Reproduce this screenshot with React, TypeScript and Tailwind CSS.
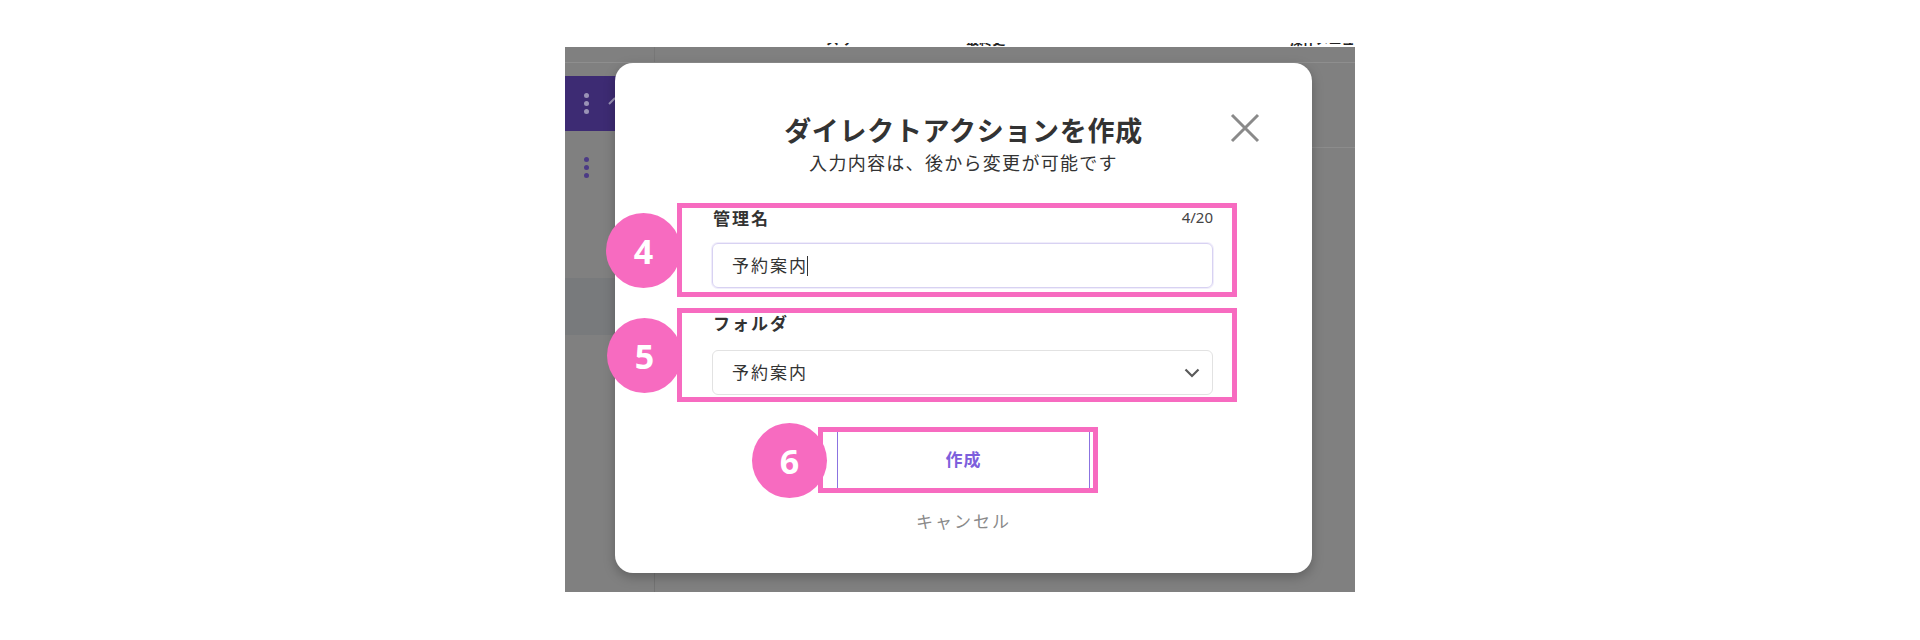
import React from "react";

const jp = { fontFamily: '"Noto Sans", "Noto Sans CJK JP", sans-serif' };

function Circle({ n, className }: { n: string; className: string }) {
  return (
    <div
      className={`absolute z-10 w-[75px] h-[75px] rounded-full bg-[#f76bc0] flex items-center justify-center text-white font-bold text-[34px] leading-none ${className}`}
      style={{ fontFamily: '"Open Sans", "Noto Sans", sans-serif' }}
    >
      {n}
    </div>
  );
}

function Dots({ color }: { color: string }) {
  return (
    <div className="flex flex-col gap-[3px]">
      <div className={`w-[5px] h-[5px] rounded-full ${color}`} />
      <div className={`w-[5px] h-[5px] rounded-full ${color}`} />
      <div className={`w-[5px] h-[5px] rounded-full ${color}`} />
    </div>
  );
}

export default function App() {
  return (
    <div className="w-[1920px] h-[640px] bg-white overflow-hidden" style={jp}>
      {/* top cropped text fragments */}
      <div className="h-[47px] flex flex-col justify-end">
        <div className="h-[4px] overflow-hidden ml-[565px] w-[790px] flex text-[13px] leading-[16px] font-bold text-[#222]">
          <span className="ml-[198px] mt-[-12px] tracking-[4px]">・・・</span>
          <span className="ml-[12px] mt-[-12px] tracking-[3px]">ステー</span>
          <span className="ml-[100px] mt-[-12px]">最終更新</span>
          <span className="ml-[280px] mt-[-12px]">操作メニュー</span>
        </div>
      </div>

      {/* dimmed app area */}
      <div className="ml-[565px] w-[790px] h-[545px] bg-[#808080] relative">
        <div className="h-[16px] border-b border-[#8e8e8e] flex">
          <div className="w-[90px] border-r border-[#777]" />
        </div>
        <div className="flex h-[529px]">
          <div className="w-[90px] border-r border-[#737373] flex flex-col">
            <div className="h-[13px]" />
            <div className="h-[55px] bg-[#3d2b73] flex items-center pl-[19px] gap-[19px]">
              <Dots color="bg-[#9a93b6]" />
              <svg width="8" height="8" viewBox="0 0 8 8" className="mt-[-6px]">
                <path d="M1 7 L7 1" stroke="#9a93b6" strokeWidth="2" />
              </svg>
            </div>
            <div className="h-[26px]" />
            <div className="pl-[19px]">
              <Dots color="bg-[#4b3a85]" />
            </div>
            <div className="h-[100px]" />
            <div className="h-[57px] bg-[#787a7c]" />
          </div>
          <div className="flex-1 flex flex-col">
            <div className="h-[85px] border-b border-[#8c8c8c]" />
          </div>
        </div>

        {/* modal */}
        <div className="absolute left-[50px] top-[16px] w-[697px] h-[510px] bg-white rounded-[18px] shadow-[0_4px_12px_rgba(0,0,0,0.25)] flex flex-col pt-[54px] text-[#333]">
          <button className="absolute left-[615px] top-[50px] w-[30px] h-[30px] flex items-center justify-center">
            <svg width="30" height="30" viewBox="0 0 30 30">
              <path d="M2 2 L28 28 M28 2 L2 28" stroke="#8a8a8a" strokeWidth="3" />
            </svg>
          </button>

          <h1 className="text-[27px] leading-[28px] font-bold text-center tracking-[0.7px] text-[#333]">
            ダイレクトアクションを作成
          </h1>
          <p className="mt-[8px] text-[18px] leading-[20px] text-center tracking-[1.3px] text-[#333]">
            入力内容は、後から変更が可能です
          </p>

          {/* box 1 */}
          <div className="relative mt-[30px] ml-[62px] w-[560px] h-[94px] border-[5px] border-[#f76bc0] pl-[30px] pr-[19px] flex flex-col">
            <Circle n="4" className="left-[-76px] top-[5px]" />
            <div className="h-[35px] flex items-start justify-between">
              <span className="text-[17px] leading-[21px] font-bold tracking-[2px] ml-[1px] text-[#333]">管理名</span>
              <span className="text-[15px] leading-[18px] text-[#444]">4/20</span>
            </div>
            <div className="h-[45px] rounded-[6px] border border-[#d8d2f2] shadow-[0_0_0_1px_#f0edfb] flex items-center pl-[19px]">
              <span className="text-[17px] leading-[20px] tracking-[2px] text-[#333]">予約案内</span>
              <span className="w-[1px] h-[20px] bg-[#333] ml-[-1px]" />
            </div>
          </div>

          {/* box 2 */}
          <div className="relative mt-[11px] ml-[62px] w-[560px] h-[94px] border-[5px] border-[#f76bc0] pl-[30px] pr-[19px] flex flex-col">
            <Circle n="5" className="left-[-75px] top-[5px]" />
            <div className="h-[37px] flex items-start">
              <span className="text-[17px] leading-[21px] font-bold tracking-[2px] ml-[1px] mt-[0px] text-[#333]">フォルダ</span>
            </div>
            <div className="h-[45px] rounded-[6px] border border-[#e2e2e2] flex items-center justify-between pl-[19px] pr-[12px]">
              <span className="text-[17px] leading-[20px] tracking-[2px] text-[#333]">予約案内</span>
              <svg width="16" height="10" viewBox="0 0 16 10">
                <path d="M1.5 1.5 L8 8 L14.5 1.5" stroke="#5a5a5a" strokeWidth="2.2" fill="none" />
              </svg>
            </div>
          </div>

          {/* box 3 */}
          <div className="relative mt-[25px] ml-[203px] w-[280px] h-[66px] border-[5px] border-[#f76bc0] pl-[14px] pr-[3px] flex">
            <Circle n="6" className="left-[-71px] top-[-9px]" />
            <button className="flex-1 h-full bg-white border-x border-[#8b73e0] flex items-center justify-center text-[17px] font-bold tracking-[1px] text-[#7d5fdc]">
              作成
            </button>
          </div>

          <p className="mt-[19px] text-[17px] leading-[20px] text-center tracking-[2px] text-[#8a8a8a]">
            キャンセル
          </p>
        </div>
      </div>
    </div>
  );
}
